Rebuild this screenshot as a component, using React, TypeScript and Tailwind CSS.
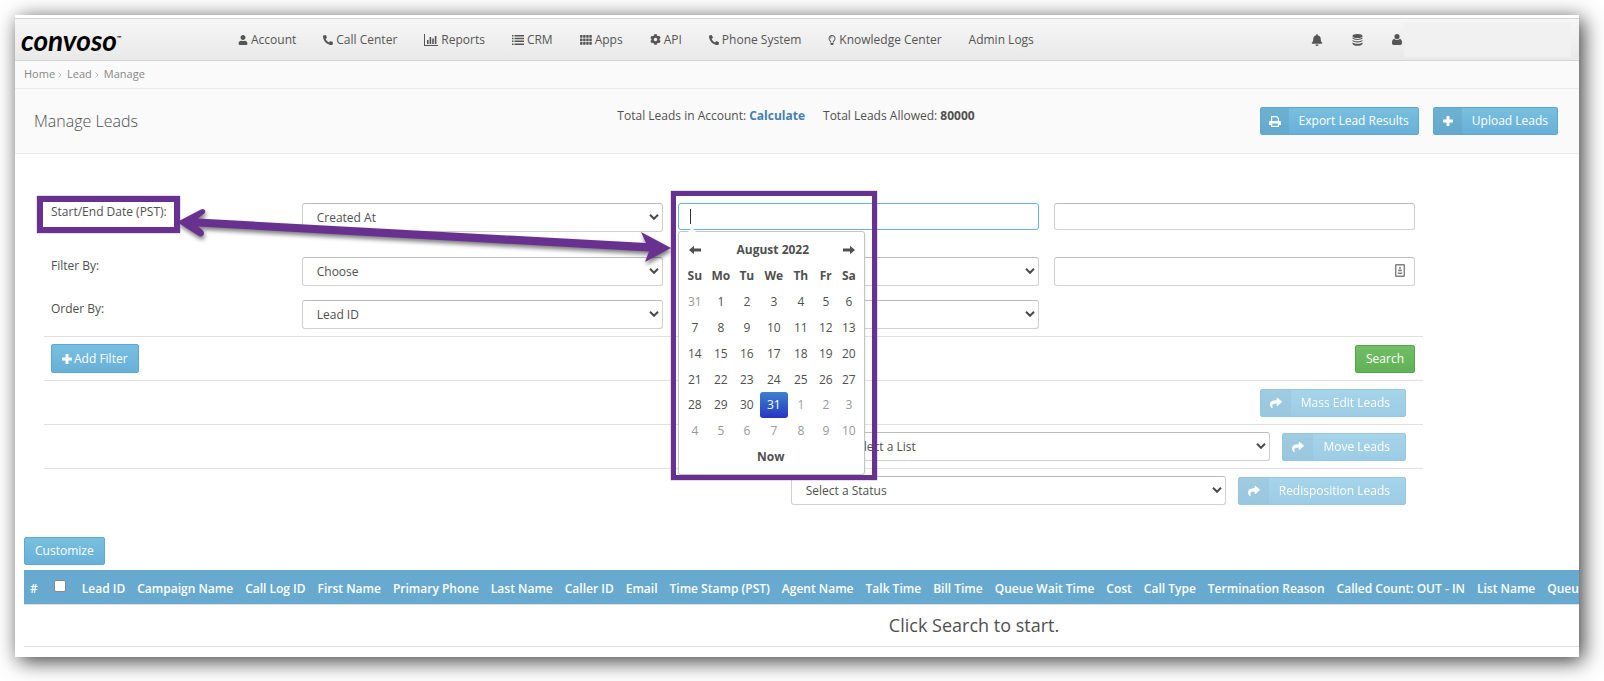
import type { ReactNode } from 'react';
import { FaBell, FaCog, FaPhoneAlt, FaRegLightbulb, FaShare, FaUser } from 'react-icons/fa';

const ChartIcon = () => (
  <svg viewBox="0 0 14 12" className="h-3 w-3.5" fill="currentColor" aria-hidden="true">
    <path d="M0 0h1v11h13v1H0zM3 6h1.6v4H3zM5.6 3h1.6v7H5.600zM8.200 4.500h1.600v5.500H8.200zM10.800 2h1.600v8h-1.600z" />
  </svg>
);

const ListIcon = () => (
  <svg viewBox="0 0 12 10" className="h-2.5 w-3" fill="currentColor" aria-hidden="true">
    <path d="M0 0h1.500v1.500H0zM2.500 0H12v1.500H2.500zM0 2.800h1.500v1.500H0zM2.500 2.800H12v1.500H2.500zM0 5.600h1.500v1.500H0zM2.500 5.600H12v1.500H2.500zM0 8.400h1.500v1.500H0zM2.500 8.400H12v1.500H2.500z" />
  </svg>
);

const GridIcon = () => (
  <svg viewBox="0 0 12 10" className="h-2.5 w-3" fill="currentColor" aria-hidden="true">
    {[0, 3.5, 7].map((y) =>
      [0, 3.1, 6.2, 9.3].map((x) => <rect key={`${x}-${y}`} x={x} y={y} width="2.5" height="2.7" rx="0.4" />),
    )}
  </svg>
);

const DatabaseIcon = () => (
  <svg viewBox="0 0 11 12" className="h-3 w-[11px]" fill="currentColor" aria-hidden="true">
    <ellipse cx="5.500" cy="2" rx="5" ry="2" />
    <path d="M.5 3.600c2 1.700 8 1.700 10 0v1c-1.500 1.900-8.500 1.900-10 0zM.5 6c2 1.700 8 1.700 10 0v1c-1.500 1.900-8.500 1.900-10 0zM.5 8.400c2 1.700 8 1.700 10 0v1.500c-1.500 2.500-8.500 2.500-10 0z" />
  </svg>
);

const ProfileIcon = () => (
  <svg viewBox="0 0 10 11" className="h-[11px] w-2.5" fill="currentColor" aria-hidden="true">
    <circle cx="5" cy="2.600" r="2.600" />
    <path d="M2 4.800C3.800 6.500 6.200 6.500 8 4.800c1.500.6 2 2.200 2 4.200 0 1.200-.6 2-1.800 2H1.800C.6 11 0 10.200 0 9c0-2 .5-3.600 2-4.200z" />
  </svg>
);

const PrintIcon = () => (
  <svg viewBox="0 0 12 11" className="h-[11px] w-3" fill="none" stroke="currentColor" strokeWidth="1.200" aria-hidden="true">
    <path d="M2.600 5V.6h5l1.800 1.800V5" />
    <path d="M0 9V6.500C0 5.400.6 5 1.500 5h9c.9 0 1.500.4 1.500 1.500V9H9.800V7.500H2.200V9z" fill="currentColor" stroke="none" />
    <path d="M2.600 7.500v2.900h6.800V7.500" />
  </svg>
);

const PlusIcon = () => (
  <svg viewBox="0 0 10 10" className="size-2.5" fill="currentColor" aria-hidden="true">
    <path d="M3.500 0.500q0-.5.5-.5h2q.5 0 .5.5v3h3q.5 0 .5.5v2q0 .5-.5.5h-3v3q0 .5-.5.5H4q-.5 0-.5-.5v-3h-3Q0 6.500 0 6V4q0-.5.500-.5h3z" />
  </svg>
);

const ArrowIcon = ({ flip }: { flip?: boolean }) => (
  <svg viewBox="0 0 12 10" className={flip ? 'h-2.5 w-3 rotate-180' : 'h-2.5 w-3'} fill="currentColor" aria-hidden="true">
    <path d="M0 5l5-4.300v2.900h7v2.800H5v2.900z" />
  </svg>
);

const navItems: { label: string; icon?: ReactNode }[] = [
  { label: 'Account', icon: <FaUser className="size-2.5" /> },
  { label: 'Call Center', icon: <FaPhoneAlt className="size-2.5" /> },
  { label: 'Reports', icon: <ChartIcon /> },
  { label: 'CRM', icon: <ListIcon /> },
  { label: 'Apps', icon: <GridIcon /> },
  { label: 'API', icon: <FaCog className="size-[11px]" /> },
  { label: 'Phone System', icon: <FaPhoneAlt className="size-2.5" /> },
  { label: 'Knowledge Center', icon: <FaRegLightbulb className="h-2.5 w-2" /> },
  { label: 'Admin Logs' },
];

const columns = [
  'Lead ID', 'Campaign Name', 'Call Log ID', 'First Name', 'Primary Phone', 'Last Name', 'Caller ID', 'Email',
  'Time Stamp (PST)', 'Agent Name', 'Talk Time', 'Bill Time', 'Queue Wait Time', 'Cost', 'Call Type',
  'Termination Reason', 'Called Count: OUT - IN', 'List Name', 'Queue',
];

const weekDays = ['Su', 'Mo', 'Tu', 'We', 'Th', 'Fr', 'Sa'];

const weeks = [
  [31, 1, 2, 3, 4, 5, 6],
  [7, 8, 9, 10, 11, 12, 13],
  [14, 15, 16, 17, 18, 19, 20],
  [21, 22, 23, 24, 25, 26, 27],
  [28, 29, 30, 31, 1, 2, 3],
  [4, 5, 6, 7, 8, 9, 10],
];

const blueButton =
  'rounded-xs border border-[#5fa9d0] bg-linear-to-b from-[#78bfdf] to-[#68b0d9] text-white';
const field = 'w-full rounded-[3px] border border-[#d0d0d0] border-t-[#bcbcbc] bg-white px-3.5 outline-none';

function Select({ label, value }: { label: string; value: string }) {
  return (
    <div className="relative w-full">
      <select aria-label={label} className={`${field} block h-[29px] appearance-none`}>
        <option>{value}</option>
      </select>
      <svg viewBox="0 0 10 6" className="pointer-events-none absolute top-[11px] right-1 h-1.5 w-2.5" fill="none" stroke="#4a4a4a" strokeWidth="2" aria-hidden="true">
        <path d="M1 .8l4 4 4-4" />
      </svg>
    </div>
  );
}

function IconButton({ icon, children, faded }: { icon: ReactNode; children: ReactNode; faded?: boolean }) {
  return (
    <button
      type="button"
      disabled={faded}
      className={`${blueButton} flex h-7 shrink-0 items-stretch ${faded ? 'opacity-65' : ''}`}
    >
      <span className={`flex items-center justify-center bg-[#5f9dbf]/40 ${faded ? 'w-[30px]' : 'w-7'}`}>{icon}</span>
      <span className={`flex items-center pl-2.5 ${faded ? 'pr-[15px]' : 'pr-[9px]'}`}>{children}</span>
    </button>
  );
}

function Calendar() {
  return (
    <div className="absolute top-7 left-0 z-10 w-[187px] rounded-[3px] border border-[#c4c4c4] bg-white pt-[5px] pr-1 pb-1 pl-[3px] shadow-sm">
      <span className="absolute -top-1 left-2 border-x-[5px] border-b-[5px] border-x-transparent border-b-white" />
      <table className="w-full table-fixed text-center">
        <colgroup>
          <col className="w-[26px]" />
          <col className="w-[26px]" />
          <col className="w-[26px]" />
          <col className="w-7" />
          <col className="w-[26px]" />
          <col className="w-6" />
          <col className="w-[22px]" />
        </colgroup>
        <thead>
          <tr className="h-[26px]">
            <th><button type="button" aria-label="Previous month" className="mx-auto block"><ArrowIcon /></button></th>
            <th colSpan={5}>August 2022</th>
            <th><button type="button" aria-label="Next month" className="mx-auto block"><ArrowIcon flip /></button></th>
          </tr>
          <tr className="h-[26px]">
            {weekDays.map((day) => <th key={day}>{day}</th>)}
          </tr>
        </thead>
        <tbody>
          {weeks.map((week, row) => (
            <tr key={row} className={row === 3 ? 'h-[25px]' : 'h-[26px]'}>
              {week.map((day, i) => {
                const outside = (row === 0 && day > 7) || (row > 3 && day < 20);
                const selected = row === 4 && day === 31;
                return (
                  <td
                    key={i}
                    className={
                      selected
                        ? 'rounded-[3px] bg-linear-to-b from-[#3f80cb] to-[#2a31c4] text-white'
                        : outside ? 'text-[#999]' : ''
                    }
                  >
                    {day}
                  </td>
                );
              })}
            </tr>
          ))}
        </tbody>
        <tfoot>
          <tr className="h-[26px]">
            <th colSpan={7}>Now</th>
          </tr>
        </tfoot>
      </table>
    </div>
  );
}

function Callouts() {
  return (
    <>
      <svg viewBox="0 0 500 60" className="pointer-events-none absolute -top-px left-[131px] z-20 h-[60px] w-[500px] drop-shadow-[1px_3px_2px_rgba(0,0,0,0.5)]" fill="#69318f" aria-hidden="true">
        <path d="M2 20L26 7.500q3-1.500 4 1t-2 4l-5 4 448 24.500-5-11L496 46l-26 14 4-10.500L23 24.500l5 4q2 3 0 5t-5 0z" />
      </svg>
      <div className="pointer-events-none absolute top-[-7px] left-[-7px] z-20 h-[37px] w-[143px] border-[6px] border-[#69318f] shadow-[0_0_1px_#69318f]" />
      <div className="pointer-events-none absolute top-[-12px] left-[627px] z-20 h-[289px] w-[206px] border-[5px] border-[#69318f] shadow-[0_0_1px_#69318f]" />
    </>
  );
}

export default function App() {
  return (
    <div className="overflow-hidden bg-white p-[15px] pr-[25px] pb-[25px] font-['Open_Sans','Noto_Sans',sans-serif] text-xs text-[#505050]">
      <div className="bg-white pt-[3px] pb-2.5 shadow-[4px_4px_20px_rgba(0,0,0,0.78)]">
        <header className="flex h-[43px] items-center border-y border-[#d4d4d4] bg-linear-to-b from-[#f6f6f6] to-[#e9e9e9] text-[#555]">
          <a href="#" className="flex w-[223px] items-start pl-1.5 font-['Lato',sans-serif] text-[28px] leading-6 font-bold text-black italic">
            convoso<span className="text-[6px] leading-5 not-italic">™</span>
          </a>
          <nav className="flex gap-[27px]">
            {navItems.map(({ label, icon }) => (
              <a key={label} href="#" className="flex items-center gap-[3px] whitespace-nowrap">
                {icon}
                {label}
              </a>
            ))}
          </nav>
          <div className="ml-auto flex items-center gap-[29px] pr-2">
            <button type="button" aria-label="Notifications"><FaBell className="size-3" /></button>
            <button type="button" aria-label="Data"><DatabaseIcon /></button>
            <div className="flex items-center gap-0.5">
              <button type="button" aria-label="Profile"><ProfileIcon /></button>
              <div className="h-[34px] w-[167px] bg-[#f1f1f1]" />
            </div>
          </div>
        </header>

        <nav aria-label="Breadcrumb" className="flex h-7 items-center gap-[3px] border-b border-[#ebebeb] bg-[#fafafa] pl-[9px] text-[11px] text-[#888]">
          <a href="#">Home</a>
          <svg viewBox="0 0 4 6" className="h-1.5 w-1" fill="none" stroke="#bbb" aria-hidden="true"><path d="M.5.5L3 3 .5 5.500" /></svg>
          <a href="#" className="pl-0.5">Lead</a>
          <svg viewBox="0 0 4 6" className="h-1.5 w-1" fill="none" stroke="#bbb" aria-hidden="true"><path d="M.5.5L3 3 .5 5.500" /></svg>
          <span className="pl-0.5">Manage</span>
        </nav>

        <section className="grid h-[65px] grid-cols-[1fr_auto_1fr] items-center border-b border-[#ebebeb] bg-[#fafafa] pr-[21px] pl-[19px]">
          <h1 className="text-base font-light">Manage Leads</h1>
          <p className="flex gap-[18px] pb-2.5">
            <span>Total Leads in Account: <a href="#" className="font-bold text-[#4580b0]">Calculate</a></span>
            <span>Total Leads Allowed: <b>80000</b></span>
          </p>
          <div className="flex justify-end gap-3.5">
            <IconButton icon={<PrintIcon />}>Export Lead Results</IconButton>
            <IconButton icon={<PlusIcon />}>Upload Leads</IconButton>
          </div>
        </section>

        <form className="relative mt-[49px] mr-[156px] ml-[29px]">
          <Callouts />
          <div className="grid grid-cols-[2fr_3fr_3fr_3fr] grid-rows-[54px_43px_36px] *:pr-2 *:pl-[7px]">
            <span className="leading-[18px]">Start/End Date (PST):</span>
            <div><Select label="Date field" value="Created At" /></div>
            <div>
              <div className="relative">
                <input aria-label="Start date" className="block h-[27px] w-full rounded-[3px] border border-[#66b4da] bg-white px-3 outline-none" />
                <span className="absolute top-1.5 left-3 h-[15px] w-px bg-[#333]" />
                <Calendar />
              </div>
            </div>
            <div><input aria-label="End date" className={`${field} block h-[27px]`} /></div>

            <span className="leading-[18px]">Filter By:</span>
            <div><Select label="Filter by" value="Choose" /></div>
            <div><Select label="Filter condition" value="" /></div>
            <div>
              <div className="relative">
                <input aria-label="Filter value" className={`${field} block h-[29px]`} />
                <svg viewBox="0 0 10 13" className="absolute top-[7px] right-2.5 h-[13px] w-2.5" fill="none" stroke="#808080" aria-hidden="true">
                  <rect x="0.700" y="0.700" width="8.600" height="11.600" rx="0.500" strokeWidth="1.400" />
                  <path d="M5 2.800v2.700M2.800 9.300h4.400" strokeWidth="1.400" />
                  <path d="M3.200 6.500h3.600" strokeWidth="1.600" />
                </svg>
              </div>
            </div>

            <span className="leading-[18px]">Order By:</span>
            <div><Select label="Order by" value="Lead ID" /></div>
            <div><Select label="Order direction" value="" /></div>
          </div>

          <div className="flex h-11 items-center justify-between border-t border-[#e0e0e0] pr-2 pl-[7px]">
            <button type="button" className={`${blueButton} flex h-[29px] items-center gap-0.5 px-2.5`}>
              <PlusIcon />
              Add Filter
            </button>
            <button type="submit" className="h-7 rounded-xs border border-[#57a54b] bg-linear-to-b from-[#73bd68] to-[#5fb353] px-2.5 text-white">
              Search
            </button>
          </div>
          <div className="flex h-11 items-center justify-end border-t border-[#e0e0e0] pr-[17px]">
            <IconButton faded icon={<FaShare className="size-3" />}>Mass Edit Leads</IconButton>
          </div>
          <div className="flex h-11 items-center justify-end gap-3 border-t border-[#e0e0e0] pr-[17px]">
            <div className="w-[435px]"><Select label="List" value="Select a List" /></div>
            <IconButton faded icon={<FaShare className="size-3" />}>Move Leads</IconButton>
          </div>
          <div className="flex h-11 items-center justify-end gap-3 border-t border-[#e0e0e0] pr-[17px]">
            <div className="w-[435px]"><Select label="Status" value="Select a Status" /></div>
            <IconButton faded icon={<FaShare className="size-3" />}>Redisposition Leads</IconButton>
          </div>
        </form>

        <div className="mt-[25px] ml-[9px] overflow-hidden">
          <button type="button" className={`${blueButton} block h-7 px-2.5`}>Customize</button>
          <table className="mt-[5px] w-[1900px]">
            <thead>
              <tr className="h-[34px] bg-[#68aacf] text-left whitespace-nowrap text-white *:px-1.5">
                <th className="pt-1 font-semibold">#</th>
                <th>
                  <input type="checkbox" aria-label="Select all leads" className="mx-1 mb-0.5 block size-3 appearance-none rounded-xs border border-[#888] bg-white" />
                </th>
                {columns.map((column, i) => (
                  <th key={column} className={`pt-1 font-semibold ${i === columns.length - 1 ? 'w-full' : ''}`}>{column}</th>
                ))}
              </tr>
            </thead>
            <tbody>
              <tr className="h-[42px] border-y border-[#e0e0e0]">
                <td colSpan={columns.length + 2} className="text-center text-lg">Click Search to start.</td>
              </tr>
            </tbody>
          </table>
        </div>
      </div>
    </div>
  );
}
